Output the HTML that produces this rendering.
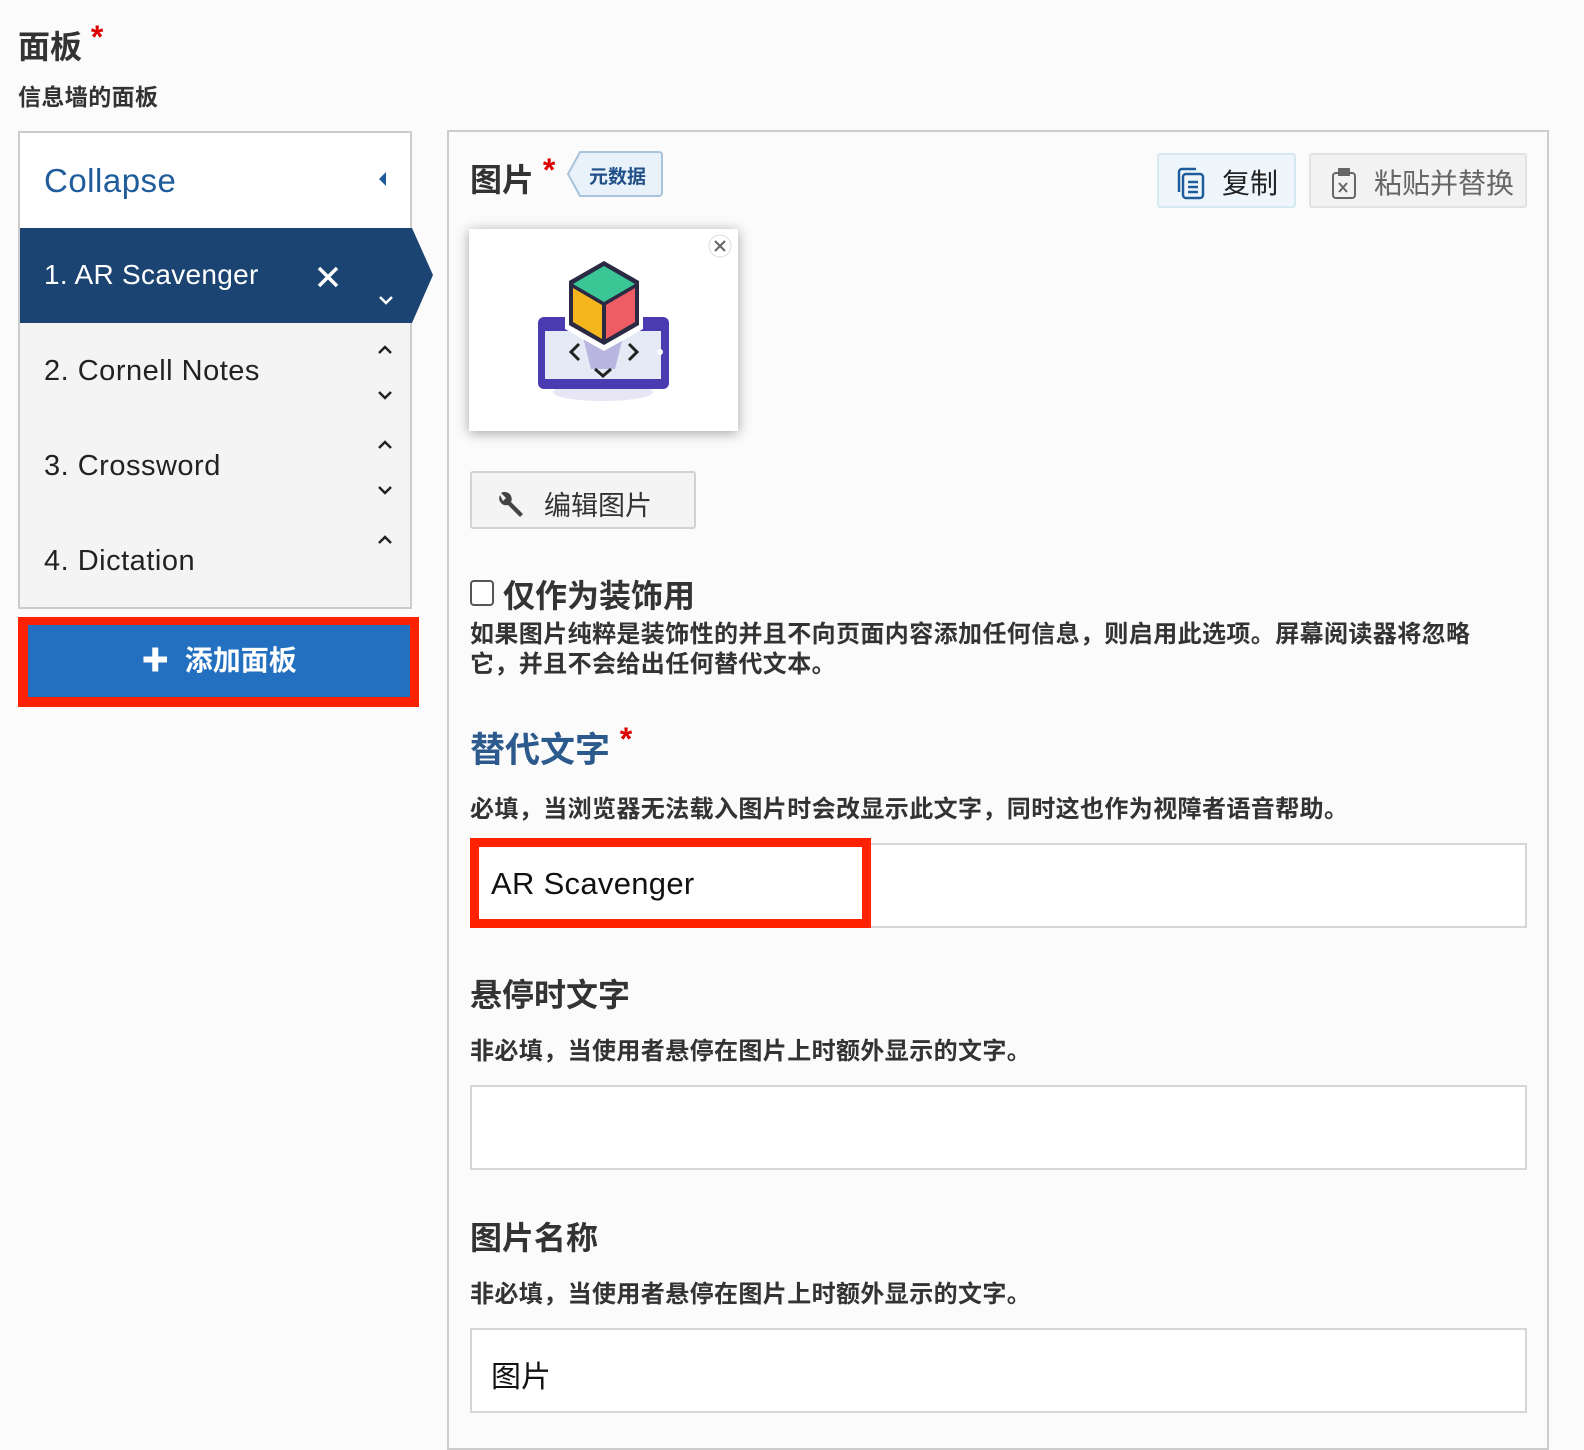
<!DOCTYPE html>
<html><head><meta charset="utf-8"><style>
*{box-sizing:border-box;margin:0;padding:0}
body{width:1584px;height:1442px;background:#fbfbfb;font-family:"Liberation Sans","Noto Sans CJK SC",sans-serif;color:#333;position:relative;overflow:hidden}
.a{position:absolute;white-space:nowrap}
.star{color:#d00;font-weight:bold}
.row{position:absolute;left:20px;width:390px;height:95px;background:#f4f4f4;font-size:29px;color:#222;letter-spacing:0.5px}
.row span{position:absolute;left:24px;top:32px}
.inp{position:absolute;left:470px;width:1057px;height:85px;background:#fff;border:2px solid #d6d6d6}
.desc{font-size:24px;font-weight:bold;color:#333;letter-spacing:0.4px}
.h{font-size:32px;font-weight:bold;color:#333}
</style></head><body>
<div class="a h" style="left:18px;top:22px">面板 <span class="star" style="position:relative;top:-10px">*</span></div>
<div class="a desc" style="left:18px;top:78px;font-size:23px">信息墙的面板</div>

<div class="a" style="left:18px;top:131px;width:394px;height:478px;border:2px solid #ccc;background:#f4f4f4"></div>
<div class="a" style="left:20px;top:133px;width:390px;height:95px;background:#fff"></div>
<div class="a" style="left:44px;top:162px;font-size:33px;color:#1f5c9c;letter-spacing:0.5px">Collapse</div>
<svg class="a" style="left:376px;top:170px" width="12" height="18"><path d="M10 2 L3 9 L10 16Z" fill="#1f5c9c"/></svg>
<svg class="a" style="left:20px;top:228px" width="414" height="95"><path d="M0 0 H392 L413 47 L392 95 H0Z" fill="#1b4472"/></svg>
<div class="a" style="left:44px;top:259px;font-size:28px;color:#fff;letter-spacing:0.3px">1. AR Scavenger</div>
<svg class="a" style="left:316px;top:265px" width="24" height="24"><path d="M3 3L21 21M21 3L3 21" stroke="#fff" stroke-width="3.5"/></svg>
<svg class="a" style="left:378px;top:295px" width="16" height="12"><path d="M2 2L8 8L14 2" stroke="#fff" stroke-width="2.5" fill="none"/></svg>
<div class="row" style="top:323px"><span>2. Cornell Notes</span></div>
<div class="row" style="top:418px"><span>3. Crossword</span></div>
<div class="row" style="top:513px;height:94px"><span>4. Dictation</span></div>
<svg class="a" style="left:376px;top:340px" width="20" height="270">
<g stroke="#222" stroke-width="2.5" fill="none">
<path d="M3 13L9 7L15 13"/><path d="M3 52L9 58L15 52"/>
<path d="M3 108L9 102L15 108"/><path d="M3 147L9 153L15 147"/>
<path d="M3 203L9 197L15 203"/></g></svg>

<div class="a" style="left:18px;top:617px;width:401px;height:90px;background:#ff2200"></div>
<div class="a" style="left:28px;top:625px;width:382px;height:72px;background:#2470c0;color:#fff;font-size:28px;font-weight:bold;text-align:center;line-height:72px">✚&nbsp;&nbsp;添加面板</div>

<div class="a" style="left:447px;top:130px;width:1102px;height:1320px;border:2px solid #ccc;background:#fbfbfb"></div>
<div class="a h" style="left:470px;top:155px">图片 <span class="star" style="position:relative;top:-10px">*</span></div>
<svg class="a" style="left:566px;top:151px" width="97" height="47"><path d="M14 1H93a3 3 0 0 1 3 3V42a3 3 0 0 1-3 3H14L2 23Z" fill="#e9f2fa" stroke="#a9c3db" stroke-width="2"/></svg>
<div class="a" style="left:589px;top:162px;font-size:19px;font-weight:bold;color:#1f4f86">元数据</div>

<div class="a" style="left:1157px;top:153px;width:139px;height:55px;background:#eef6fc;border:2px solid #d6e8f2;border-radius:3px"></div>
<svg class="a" style="left:1177px;top:166px" width="30" height="34"><g stroke="#1f5c9c" stroke-width="2.5" fill="none"><rect x="6" y="8" width="20" height="24" rx="3"/><path d="M2 26V6a3 3 0 0 1 3-3h14"/><path d="M11 16h10M11 21h10M11 26h10"/></g></svg>
<div class="a" style="left:1222px;top:162px;font-size:28px;color:#222">复制</div>
<div class="a" style="left:1309px;top:153px;width:218px;height:55px;background:#f2f2f2;border:2px solid #e2e2e2;border-radius:3px"></div>
<svg class="a" style="left:1328px;top:166px" width="30" height="34"><g stroke="#666" stroke-width="2" fill="none"><rect x="5" y="7" width="22" height="25" rx="3"/><rect x="11" y="3" width="10" height="6" fill="#666"/><path d="M11 17l8 9M19 17l-8 9"/></g></svg>
<div class="a" style="left:1374px;top:162px;font-size:28px;color:#666">粘贴并替换</div>

<div class="a" style="left:469px;top:229px;width:269px;height:202px;background:#fff;box-shadow:0 2px 12px rgba(0,0,0,.35)"></div>
<svg class="a" style="left:469px;top:229px" width="269" height="202">
<circle cx="251" cy="17" r="11" fill="#fff" stroke="#ddd"/><path d="M246 12l10 10M256 12l-10 10" stroke="#666" stroke-width="2"/>
<ellipse cx="134" cy="163" rx="50" ry="9" fill="#e8e6f4"/>
<rect x="69" y="88" width="131" height="72" rx="6" fill="#4b3bb0"/>
<rect x="76" y="102" width="116" height="48" fill="#e3eaf5"/>
<circle cx="191" cy="123" r="3" fill="#fff"/>
<path d="M112 100L156 100L146 140L122 140Z" fill="#b8b6e0"/>
<path d="M110 115l-8 8 8 8M160 115l8 8-8 8M126 140l8 7 8-7" stroke="#222" stroke-width="3" fill="none"/>
<path d="M135 28L174 50V100L135 122L96 100V50Z" fill="#fff"/>
<path d="M135 32L170 52V96L135 116L100 96V52Z" fill="#2a2a44"/>
<path d="M135 37L166 55L135 73L104 55Z" fill="#3ac795"/>
<path d="M104 59L133 76V110L104 93Z" fill="#f5b51d"/>
<path d="M137 76L166 59V93L137 110Z" fill="#ee5d63"/>
</svg>

<div class="a" style="left:470px;top:471px;width:226px;height:58px;background:#f4f4f4;border:2px solid #d2d2d2;border-radius:3px"></div>
<svg class="a" style="left:494px;top:489px" width="32" height="32"><path d="M6 6a7 7 0 0 0 8 10L26 28l3-3L17 13A7 7 0 0 0 7 4l5 5-3 3Z" fill="#444"/></svg>
<div class="a" style="left:544px;top:484px;font-size:27px;color:#333">编辑图片</div>

<div class="a" style="left:470px;top:580px;width:24px;height:26px;border:2px solid #555;border-radius:4px;background:#fff"></div>
<div class="a h" style="left:503px;top:571px">仅作为装饰用</div>
<div class="a desc" style="left:470px;top:620px;line-height:30px">如果图片纯粹是装饰性的并且不向页面内容添加任何信息，则启用此选项。屏幕阅读器将忽略<br>它，并且不会给出任何替代文本。</div>

<div class="a" style="left:470px;top:722px;font-size:35px;font-weight:bold;color:#2c5a8c">替代文字 <span class="star" style="position:relative;top:-12px;font-size:32px">*</span></div>
<div class="a desc" style="left:470px;top:789px">必填，当浏览器无法载入图片时会改显示此文字，同时这也作为视障者语音帮助。</div>
<div class="inp" style="top:843px"></div>
<div class="a" style="left:470px;top:838px;width:401px;height:90px;border:9px solid #ff2200;background:#fff"></div>
<div class="a" style="left:491px;top:866px;font-size:31px;color:#111;letter-spacing:0.3px">AR Scavenger</div>

<div class="a h" style="left:470px;top:970px">悬停时文字</div>
<div class="a desc" style="left:470px;top:1031px">非必填，当使用者悬停在图片上时额外显示的文字。</div>
<div class="inp" style="top:1085px"></div>

<div class="a h" style="left:470px;top:1213px">图片名称</div>
<div class="a desc" style="left:470px;top:1274px">非必填，当使用者悬停在图片上时额外显示的文字。</div>
<div class="inp" style="top:1328px"></div>
<div class="a" style="left:491px;top:1352px;font-size:30px;color:#111">图片</div>
</body></html>
